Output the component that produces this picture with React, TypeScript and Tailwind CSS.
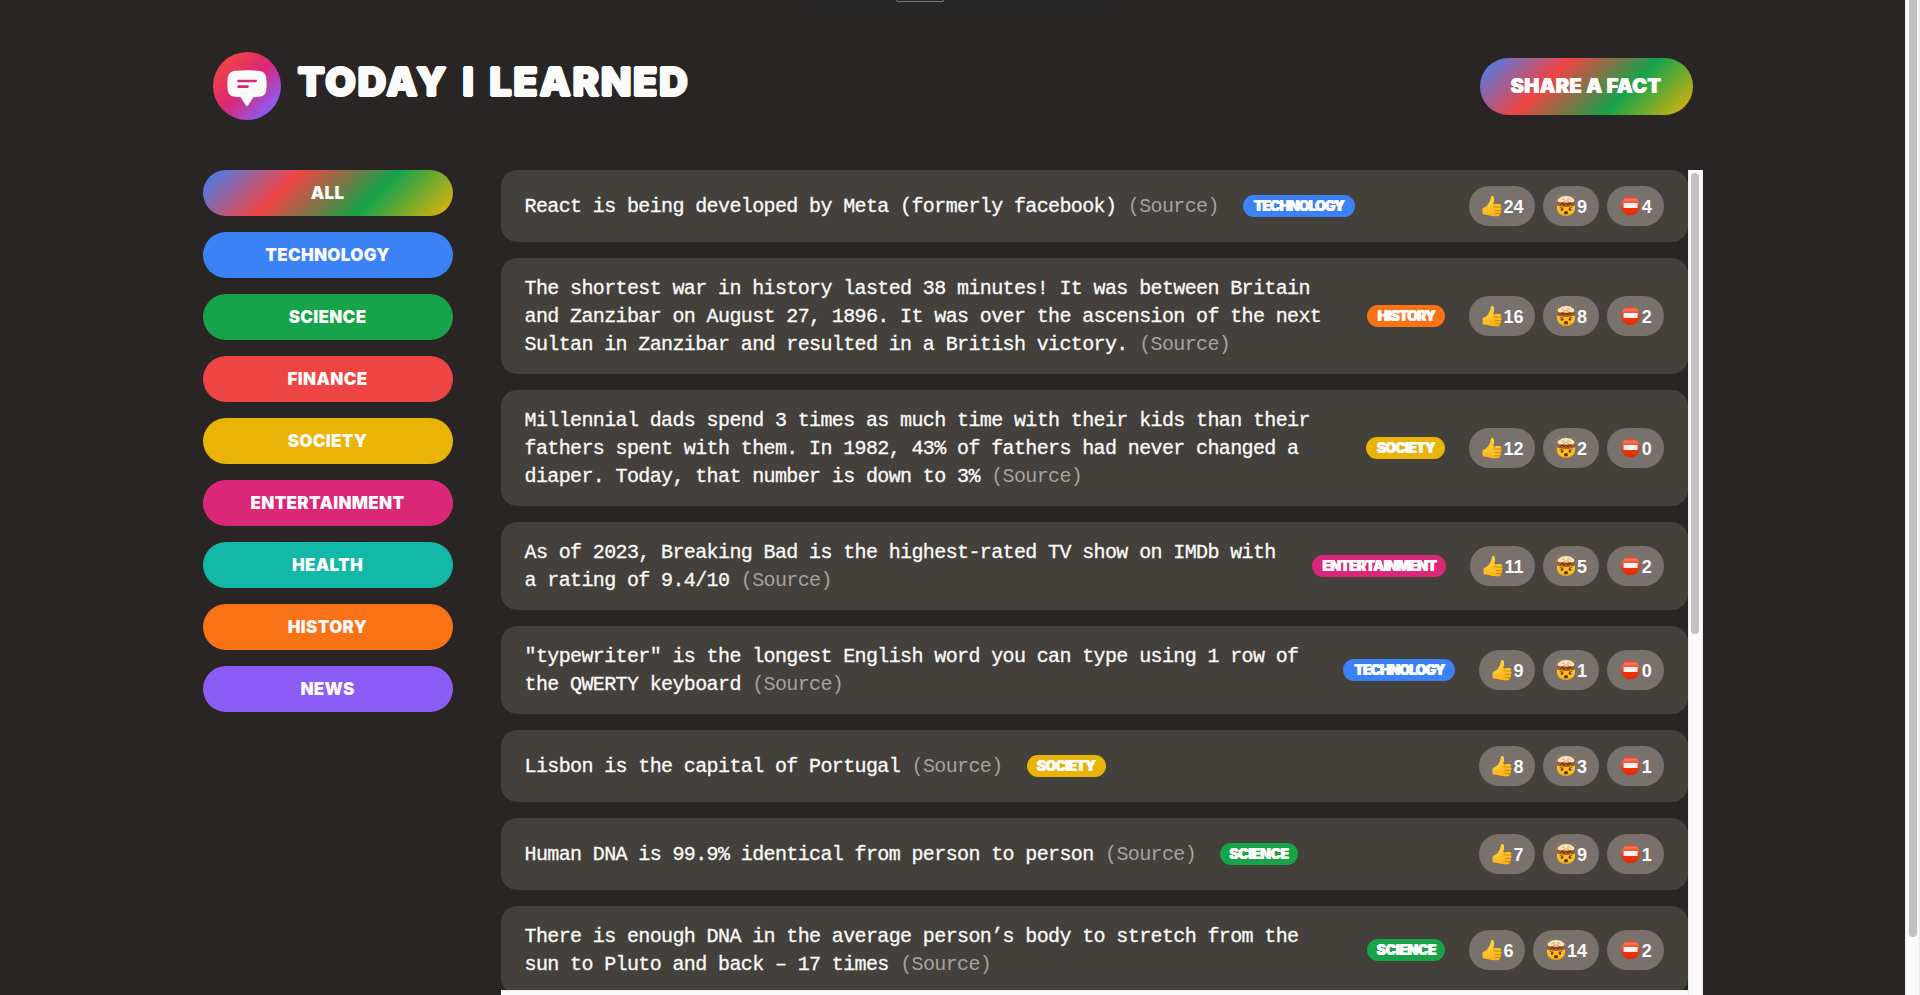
import React from "react";

type Cat = { name: string; bg: string; tag: string };

const CATS: Record<string, Cat> = {
  technology: { name: "TECHNOLOGY", bg: "bg-[#3b82f6]", tag: "w-[112px] tracking-[-1px]" },
  science: { name: "SCIENCE", bg: "bg-[#16a34a]", tag: "w-[78px] tracking-[-0.4px]" },
  finance: { name: "FINANCE", bg: "bg-[#ef4444]", tag: "w-[78px] tracking-[-0.4px]" },
  society: { name: "SOCIETY", bg: "bg-[#eab308]", tag: "w-[79px] tracking-[-0.8px]" },
  entertainment: { name: "ENTERTAINMENT", bg: "bg-[#db2777]", tag: "w-[134px] tracking-[-0.75px]" },
  health: { name: "HEALTH", bg: "bg-[#14b8a6]", tag: "w-[78px] tracking-[-0.8px]" },
  history: { name: "HISTORY", bg: "bg-[#f97316]", tag: "w-[78px] tracking-[-0.9px]" },
  news: { name: "NEWS", bg: "bg-[#8b5cf6]", tag: "w-[78px] tracking-[-0.8px]" },
};

const FACTS: { lines: string[]; cat: string; votes: [number, number, number] }[] = [
  { lines: ["React is being developed by Meta (formerly facebook)"], cat: "technology", votes: [24, 9, 4] },
  {
    lines: [
      "The shortest war in history lasted 38 minutes! It was between Britain",
      "and Zanzibar on August 27, 1896. It was over the ascension of the next",
      "Sultan in Zanzibar and resulted in a British victory.",
    ],
    cat: "history",
    votes: [16, 8, 2],
  },
  {
    lines: [
      "Millennial dads spend 3 times as much time with their kids than their",
      "fathers spent with them. In 1982, 43% of fathers had never changed a",
      "diaper. Today, that number is down to 3%",
    ],
    cat: "society",
    votes: [12, 2, 0],
  },
  { lines: ["As of 2023, Breaking Bad is the highest-rated TV show on IMDb with", "a rating of 9.4/10"], cat: "entertainment", votes: [11, 5, 2] },
  { lines: ['"typewriter" is the longest English word you can type using 1 row of', "the QWERTY keyboard"], cat: "technology", votes: [9, 1, 0] },
  { lines: ["Lisbon is the capital of Portugal"], cat: "society", votes: [8, 3, 1] },
  { lines: ["Human DNA is 99.9% identical from person to person"], cat: "science", votes: [7, 9, 1] },
  { lines: ["There is enough DNA in the average person’s body to stretch from the", "sun to Pluto and back – 17 times"], cat: "science", votes: [6, 14, 2] },
];

const GRADIENT = "bg-[linear-gradient(135deg,#3b82f6,#ef4444,#16a34a,#eab308)]";
const HEAVY = "font-['Inter',sans-serif] font-black [text-shadow:0.4px_0_0_#fafaf9,-0.4px_0_0_#fafaf9]";

function Logo() {
  return (
    <svg className="size-[68px] shrink-0" viewBox="0 0 68 68">
      <defs>
        <linearGradient id="logo" x1="0.15" y1="0.15" x2="0.85" y2="0.85">
          <stop offset="0" stopColor="#ef4444" />
          <stop offset="0.5" stopColor="#db2777" />
          <stop offset="1" stopColor="#8b5cf6" />
        </linearGradient>
      </defs>
      <circle cx="34" cy="34" r="34" fill="url(#logo)" />
      <path d="M22 18.8Q34 17.6 46 18.8Q52.6 19.6 53.3 26Q54 32 53.3 38Q52.6 44.2 46 44.8L40.4 45.2L35 53.4Q34 54.8 33 53.4L27.6 45.2L22 44.8Q15.4 44.2 14.7 38Q14 32 14.7 26Q15.4 19.6 22 18.8Z" fill="#fafaf9" />
      <path d="M25.5 29H42.6M25.5 34.6H34.5" stroke="#db2777" strokeWidth="2.7" strokeLinecap="round" />
    </svg>
  );
}

function Thumb() {
  return (
    <svg className="h-[22px] w-[22px] shrink-0" viewBox="0 0 22 22">
      <defs>
        <linearGradient id="th" x1="0" y1="0" x2="0.3" y2="1">
          <stop offset="0" stopColor="#ffdc4a" />
          <stop offset="1" stopColor="#fcb418" />
        </linearGradient>
      </defs>
      <path d="M1.7 13Q4.600 12.300 6.600 10Q9.400 6.800 9.900 2.300Q10.200 .6 11.500 .9Q13.300 1.400 13.100 4.800Q12.900 7 12.200 9L18.800 9Q20.400 9.200 20.300 10.700Q20.200 11.700 19.400 12Q20.800 12.500 20.600 14Q20.400 15.300 19.300 15.500Q20.300 16.200 20 17.400Q19.600 18.500 18.600 18.600Q19.200 19.400 18.700 20.200Q18.100 21.100 16.600 21.200Q11 21.600 7.500 20.200Q4.500 19.300 1.900 19.600Q1 16 1.700 13Z" fill="url(#th)" />
      <path d="M19.400 12.100H14.200M19.300 15.500H14.200M18.600 18.600H14.200M14.400 9.200Q12.300 10 12.900 12" stroke="#d08508" strokeWidth=".9" fill="none" strokeLinecap="round" />
    </svg>
  );
}

function MindBlown() {
  return (
    <svg className="h-[22px] w-[22px] shrink-0" viewBox="0 0 22 22">
      <path d="M1.700 10.500Q1.500 20.900 11 21Q20.500 20.900 20.300 10.500Q11 13 1.700 10.500Z" fill="#fcbf1c" />
      <path d="M4 17Q7 21 11 21Q15 21 18 17Q16 19.600 11 19.600Q6 19.600 4 17Z" fill="#e8930c" />
      <path d="M2.300 7.500Q2 11 6 10.800Q11 12.500 16 10.800Q20 11 19.700 7.500Q11 6 2.300 7.500Z" fill="#b0561d" />
      <path d="M5 9.400L7 7.800L9 10L11 7.600L13 10L15 7.800L17.200 9.400" stroke="#6b2b12" strokeWidth="1" fill="none" />
      <path d="M3.200 6.700Q1.500 3.600 5 3Q6.500 .8 9 1.500Q11 .2 13 1.500Q16 .8 17.200 3Q20.400 3.800 18.800 6.700Q17 8 14.500 7Q11 8.300 8 7Q5 8 3.200 6.700Z" fill="#f8e6bd" />
      <path d="M6.500 4.500Q8 3 9.500 4.500M12 4.200Q14 3 15.300 4.800M8 6.400Q11 5 14 6.500" stroke="#c98f48" strokeWidth=".8" fill="none" />
      <path d="M5 12.300L8.300 13.200M17 12.300L13.700 13.200" stroke="#9a5a10" strokeWidth=".9" strokeLinecap="round" />
      <circle cx="7" cy="14.500" r="1.200" fill="#5b2c0d" />
      <circle cx="15" cy="14.500" r="1.200" fill="#5b2c0d" />
      <ellipse cx="11" cy="17.700" rx="2.100" ry="1.600" fill="#6b2f0e" />
      <path d="M.8 2.200h1.200M.6 6h1M20 1.800h1.200M20.500 6h1M3.300 .9h1M17.900 .7h1" stroke="#d69422" strokeWidth="1.100" />
    </svg>
  );
}

function NoEntry() {
  return (
    <svg className="h-[22px] w-[23px] shrink-0" viewBox="0 0 23 22">
      <defs>
        <linearGradient id="ne" x1="0" y1="0" x2="0" y2="1">
          <stop offset="0" stopColor="#e8320f" />
          <stop offset=".18" stopColor="#f27a60" />
          <stop offset=".38" stopColor="#ef4a26" />
          <stop offset=".62" stopColor="#f0350a" />
          <stop offset="1" stopColor="#e02a06" />
        </linearGradient>
      </defs>
      <circle cx="11.500" cy="10.700" r="9.500" fill="url(#ne)" />
      <rect x="4.600" y="8" width="14" height="5" rx=".6" fill="#f4f4f4" />
    </svg>
  );
}

function Vote({ icon, n }: { icon: React.ReactNode; n: number }) {
  return (
    <button className="flex h-10 items-center rounded-full bg-[#78716c] pl-3 pr-[11.7px] text-[18px] leading-none font-bold">
      {icon}
      <span className="pt-[2px]">{n}</span>
    </button>
  );
}

export default function App() {
  return (
    <div className="flex h-[995px] w-full overflow-hidden bg-[#292524] text-[#fafaf9] font-['Liberation_Sans',sans-serif]">
      <div className="relative flex min-w-0 flex-1 justify-center">
        <div className="absolute left-[811px] top-0 flex h-[10px] w-[298px] justify-center bg-[#262626] shadow-[0_2px_8px_rgba(38,38,38,0.6)]">
          <div className="mr-[80px] h-[2px] w-12 rounded-b-sm border-x border-b border-[#7b7b7b]" />
        </div>
        <div className="flex w-[1500px] flex-col">
          <header className="flex h-[170px] shrink-0 items-start justify-between px-[10px] pt-[52px]">
            <div className="flex items-start gap-[17px]">
              <Logo />
              <h1 className="whitespace-nowrap pt-[9px] font-['Inter',sans-serif] text-[40px] leading-[42px] font-black tracking-[1.45px] [word-spacing:4.5px] [text-shadow:1px_0_0_#fafaf9,-1px_0_0_#fafaf9,0_0.6px_0_#fafaf9,0_-0.6px_0_#fafaf9]">
                TODAY I LEARNED
              </h1>
            </div>
            <button className={`mt-[6px] h-[57px] w-[213px] whitespace-nowrap rounded-full pb-[1px] text-[20px] tracking-[0.3px] ${HEAVY} ${GRADIENT}`}>
              SHARE A FACT
            </button>
          </header>
          <div className="flex min-h-0 flex-1 gap-12">
            <aside className="w-[250px] shrink-0">
              <ul className={`flex flex-col gap-4 text-[17px] tracking-[0.3px] ${HEAVY}`}>
                <li>
                  <button className={`h-[46px] w-full rounded-full pt-[2px] ${GRADIENT}`}>ALL</button>
                </li>
                {Object.values(CATS).map((c) => (
                  <li key={c.name}>
                    <button className={`h-[46px] w-full rounded-full pt-[2px] ${c.bg}`}>{c.name}</button>
                  </li>
                ))}
              </ul>
            </aside>
            <main className="flex min-w-0 flex-1">
              <div className="flex min-w-0 flex-1 flex-col">
                <ul className="flex h-[820px] flex-col gap-4 overflow-hidden">
                  {FACTS.map((f) => {
                    const c = CATS[f.cat];
                    const wrapped = f.lines.length > 1;
                    return (
                      <li key={f.lines[0]} className="flex shrink-0 items-center gap-6 rounded-2xl bg-[#44403c] px-6 py-4">
                        <p className={`whitespace-nowrap font-['Liberation_Mono',monospace] text-[20px] leading-7 tracking-[-0.62px] [-webkit-text-stroke:0.3px] ${wrapped ? "-mb-px flex-1 pt-px" : "-mb-px pt-px"}`}>
                          {f.lines.map((l, i) => (
                            <React.Fragment key={l}>
                              {i > 0 && <br />}
                              {l}
                            </React.Fragment>
                          ))}{" "}
                          <a className="text-[#a8a29e] [-webkit-text-stroke:0]">(Source)</a>
                        </p>
                        <span className={`flex h-[22px] shrink-0 items-center justify-center rounded-full text-[14px] leading-none ${HEAVY} ${c.bg} ${c.tag}`}>
                          {c.name}
                        </span>
                        <div className={`flex shrink-0 gap-2 ${wrapped ? "" : "ml-auto"}`}>
                          <Vote icon={<Thumb />} n={f.votes[0]} />
                          <Vote icon={<MindBlown />} n={f.votes[1]} />
                          <Vote icon={<NoEntry />} n={f.votes[2]} />
                        </div>
                      </li>
                    );
                  })}
                </ul>
                <div className="h-[5px] border-t border-[#ededed] bg-[#fafafa]" />
              </div>
              <div className="flex w-[15px] justify-center border-x border-[#ededed] bg-[#fafafa] pt-[3px]">
                <div className="h-[461px] w-2 rounded-full bg-[#c1c1c1]" />
              </div>
            </main>
          </div>
        </div>
      </div>
      <div className="flex w-[15px] shrink-0 justify-center border-x border-[#ededed] bg-[#fafafa]">
        <div className="h-[937px] w-2 rounded-b-full bg-[#c1c1c1]" />
      </div>
    </div>
  );
}
